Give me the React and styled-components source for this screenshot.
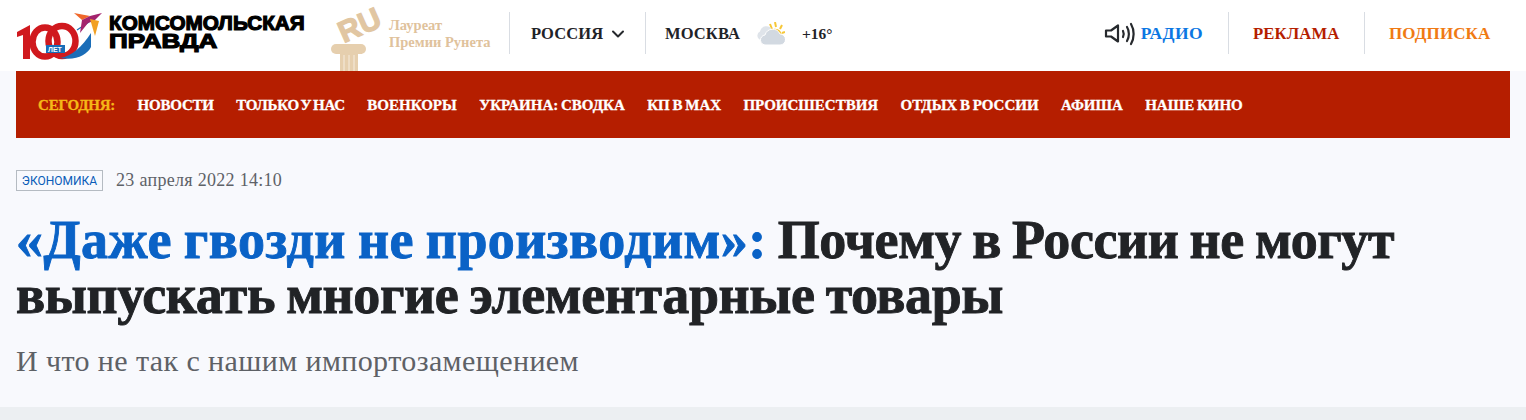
import React from 'react';
import styled, { createGlobalStyle } from 'styled-components';
import { ChevronDown } from 'lucide-react';

const GlobalStyle = createGlobalStyle`
  html, body {
    margin: 0;
    padding: 0;
    background: #F8F9FD;
  }
  body {
    font-family: "Liberation Serif", "DejaVu Serif", serif;
    overflow: hidden;
  }
`;

const Page = styled.div`
  width: 1526px;
  height: 420px;
  display: flex;
  flex-direction: column;
`;

const TopBar = styled.header`
  height: 71px;
  flex: none;
  background: #fff;
  display: flex;
  align-items: center;
  padding: 0 16px;
  box-sizing: border-box;
`;

const LogoWrap = styled.div`
  display: flex;
  align-items: center;
  gap: 5px;
  width: 310px;
  flex: none;
`;

const LogoName = styled.div`
  font-family: "Liberation Sans", Arial, sans-serif;
  font-weight: 700;
  font-size: 20.5px;
  line-height: 18px;
  color: #000;
  -webkit-text-stroke: 1.2px #000;
  margin-top: -8px;
  white-space: nowrap;
`;

const LogoLine = styled.div`
  transform: scaleX(${p => p.$stretch || 1});
  transform-origin: left center;
`;

const Award = styled.div`
  width: 183px;
  height: 71px;
  flex: none;
  display: flex;
  align-items: center;
  gap: 3px;
`;

const AwardText = styled.div`
  font-size: 14.5px;
  line-height: 17px;
  font-weight: 700;
  color: #DFC29C;
  white-space: nowrap;
  margin-top: -3px;
`;

const Section = styled.div`
  height: 42px;
  margin-top: -5px;
  display: flex;
  align-items: center;
  border-left: ${p => (p.$divider ? '1px solid #D9DDE3' : 'none')};
  padding-left: ${p => p.$pad || 0}px;
  padding-top: 1px;
  width: ${p => p.$width || 'auto'};
  margin-right: ${p => p.$after || 0}px;
  box-sizing: border-box;
  flex: none;
`;

const Caption = styled.span`
  font-size: ${p => p.$size || 16.5}px;
  font-weight: 700;
  color: ${p => p.$color || '#1F2328'};
  letter-spacing: ${p => p.$spacing || 0.1}px;
  white-space: nowrap;
`;

const Chevron = styled(ChevronDown)`
  margin-left: 5px;
  color: #26292D;
`;

const Temp = styled.span`
  font-size: 15.5px;
  font-weight: 700;
  color: #1F2328;
  margin-left: 17px;
`;

const Spacer = styled.div`
  flex: 1;
`;

const Nav = styled.nav`
  height: 67px;
  flex: none;
  margin: 0 16px;
  background: #B51E00;
  display: flex;
  align-items: center;
  gap: 22.4px;
  padding: 2px 22px 0;
  box-sizing: border-box;
`;

const NavItem = styled.a`
  font-size: 15px;
  font-weight: 700;
  color: ${p => (p.$accent ? '#F5B818' : '#fff')};
  -webkit-text-stroke: 0.3px currentColor;
  letter-spacing: ${p => (p.$tight ? -0.2 : 0)}px;
  word-spacing: ${p => (p.$tight ? -2 : -1)}px;
  white-space: nowrap;
`;

const Article = styled.main`
  flex: 1;
  padding: 32px 16px 0;
`;

const MetaRow = styled.div`
  display: flex;
  align-items: center;
  gap: 13px;
`;

const Tag = styled.span`
  box-sizing: border-box;
  height: 21px;
  width: 87px;
  border: 1px solid #B5BBC2;
  font-family: Roboto, "Liberation Sans", sans-serif;
  font-size: 12px;
  color: #0A5CB8;
  display: flex;
  align-items: center;
  justify-content: center;
`;

const DateText = styled.span`
  font-size: 18px;
  letter-spacing: 0.3px;
  color: #5E6268;
`;

const Title = styled.h1`
  margin: 22px 0 0;
  font-size: 54px;
  line-height: 55px;
  font-weight: 700;
  color: #212326;
  letter-spacing: -0.4px;
  word-spacing: -2px;
  -webkit-text-stroke: 0.9px currentColor;
`;

const Lead = styled.span`
  color: #0A62C6;
  letter-spacing: 0.45px;
`;

const Subtitle = styled.p`
  margin: 21px 0 0;
  font-size: 30px;
  line-height: 34px;
  letter-spacing: 0.4px;
  color: #5E6166;
`;

const Footer = styled.div`
  height: 13px;
  flex: none;
  background: #ECEFF2;
`;

const LogoMark = () => (
  <svg width="88" height="50" viewBox="16 8 88 50" style={{ flex: 'none' }}>
    <path d="M17 29 30 22v34h-7V32l-6 2z" fill="#D0191E" />
    <ellipse cx="45" cy="39" rx="12.500" ry="14.500" fill="none" stroke="#D0191E" strokeWidth="6.500" />
    <ellipse cx="62" cy="38" rx="13.500" ry="15" fill="none" stroke="#D0191E" strokeWidth="6.500" />
    <path d="M60 55C72 53 82 44 91 30V44C87 52 76 58 60 55z" fill="#1A6DB8" />
    <path d="M77 27 89 19" stroke="#1A6DB8" strokeWidth="1.200" fill="none" />
    <rect x="46" y="42" width="19" height="8" fill="#1A6DB8" />
    <text x="48" y="49" fontFamily="Liberation Sans" fontWeight="700" fontSize="7" fill="#fff">ЛЕТ</text>
    <path d="M74 10 90 13 82 17z" fill="#F0682A" />
    <path d="M82 17 90 13 102 10 94 18 88 20 80 30z" fill="#A3246E" />
    <path d="M90 16 99 18 95 33z" fill="#F2A024" />
  </svg>
);

const AwardIcon = () => (
  <svg width="60" height="71" viewBox="326 0 60 71" style={{ flex: 'none' }}>
    <g fill="#E6CFAE">
      <rect x="340" y="53" width="18" height="18" />
      <rect x="336" y="50" width="26" height="4" />
      <circle cx="336" cy="49" r="5" />
      <circle cx="361" cy="49" r="5" />
      <rect x="336" y="44" width="25" height="7" />
    </g>
    <path d="M344 55v16M349 55v16M354 55v16" stroke="#F3E6D3" strokeWidth="1.300" />
    <text x="337" y="37" transform="rotate(-24 355 24)" fontFamily="Liberation Sans" fontWeight="700" fontSize="30" fill="#E1C6A2" stroke="#E1C6A2" strokeWidth="1.200">RU</text>
  </svg>
);

const WeatherIcon = () => (
  <svg width="28" height="24" viewBox="758 22 28 24" style={{ margin: '0 0 0 17px', flex: 'none' }}>
    <path d="M773 29l-2-5M777 27l-1-5M781 29l2-4M783 33l3-1" stroke="#F6C737" strokeWidth="2" fill="none" />
    <path d="M772 30a7 7 0 0 1 11 5h-11z" fill="#F6C737" />
    <path d="M762 40a4.500 4.500 0 0 1-1-8.500 6.500 6.500 0 0 1 12-2l3 11z" fill="#DFE4EA" />
    <path d="M767 45a5 5 0 0 1-1-10 8 8 0 0 1 15-1 5.500 5.500 0 0 1 0 11z" fill="#D2D9E1" stroke="#fff" strokeWidth="1" />
  </svg>
);

const SpeakerIcon = () => (
  <svg width="31" height="24" viewBox="0 0 31 24" fill="none" stroke="#26292D" strokeWidth="2.200" strokeLinecap="round" style={{ flex: 'none', marginRight: 6 }}>
    <path d="M2 8.500h5l7-5v16l-7-5H2z" strokeLinejoin="round" />
    <path d="M19 9c1 2 1 4 0 6" />
    <path d="M23 5c2.500 4 2.500 10 0 14" />
    <path d="M27 2c3.500 6 3.500 14 0 20" />
  </svg>
);

const links = [
  { label: 'НОВОСТИ', tight: true },
  { label: 'ТОЛЬКО У НАС', tight: true },
  { label: 'ВОЕНКОРЫ' },
  { label: 'УКРАИНА: СВОДКА' },
  { label: 'КП В MAX' },
  { label: 'ПРОИСШЕСТВИЯ' },
  { label: 'ОТДЫХ В РОССИИ' },
  { label: 'АФИША' },
  { label: 'НАШЕ КИНО' },
];

const App = () => (
  <Page>
    <GlobalStyle />
    <TopBar>
      <LogoWrap>
        <LogoMark />
        <LogoName>
          <LogoLine $stretch={1.01}>КОМСОМОЛЬСКАЯ</LogoLine>
          <LogoLine $stretch={1.27}>ПРАВДА</LogoLine>
        </LogoName>
      </LogoWrap>
      <Award>
        <AwardIcon />
        <AwardText>Лауреат<br />Премии Рунета</AwardText>
      </Award>
      <Section $divider $pad={21} $width="136px">
        <Caption>РОССИЯ</Caption>
        <Chevron size={20} strokeWidth={2.4} />
      </Section>
      <Section $divider $pad={19}>
        <Caption>МОСКВА</Caption>
        <WeatherIcon />
        <Temp>+16°</Temp>
      </Section>
      <Spacer />
      <Section $after={25}>
        <SpeakerIcon />
        <Caption $color="#0B77E3" $size={17.5} $spacing={0.4}>РАДИО</Caption>
      </Section>
      <Section $divider $pad={24} $width="136px">
        <Caption $color="#B51E00" $size={16.7}>РЕКЛАМА</Caption>
      </Section>
      <Section $divider $pad={24} $width="146px">
        <Caption $color="#F07A13" $size={17}>ПОДПИСКА</Caption>
      </Section>
    </TopBar>
    <Nav>
      <NavItem $accent $tight>СЕГОДНЯ:</NavItem>
      {links.map(link => <NavItem key={link.label} $tight={link.tight}>{link.label}</NavItem>)}
    </Nav>
    <Article>
      <MetaRow>
        <Tag>ЭКОНОМИКА</Tag>
        <DateText>23 апреля 2022 14:10</DateText>
      </MetaRow>
      <Title><Lead>«Даже гвозди не производим»:</Lead> Почему в России не могут выпускать многие элементарные товары</Title>
      <Subtitle>И что не так с нашим импортозамещением</Subtitle>
    </Article>
    <Footer />
  </Page>
);

export default App;
